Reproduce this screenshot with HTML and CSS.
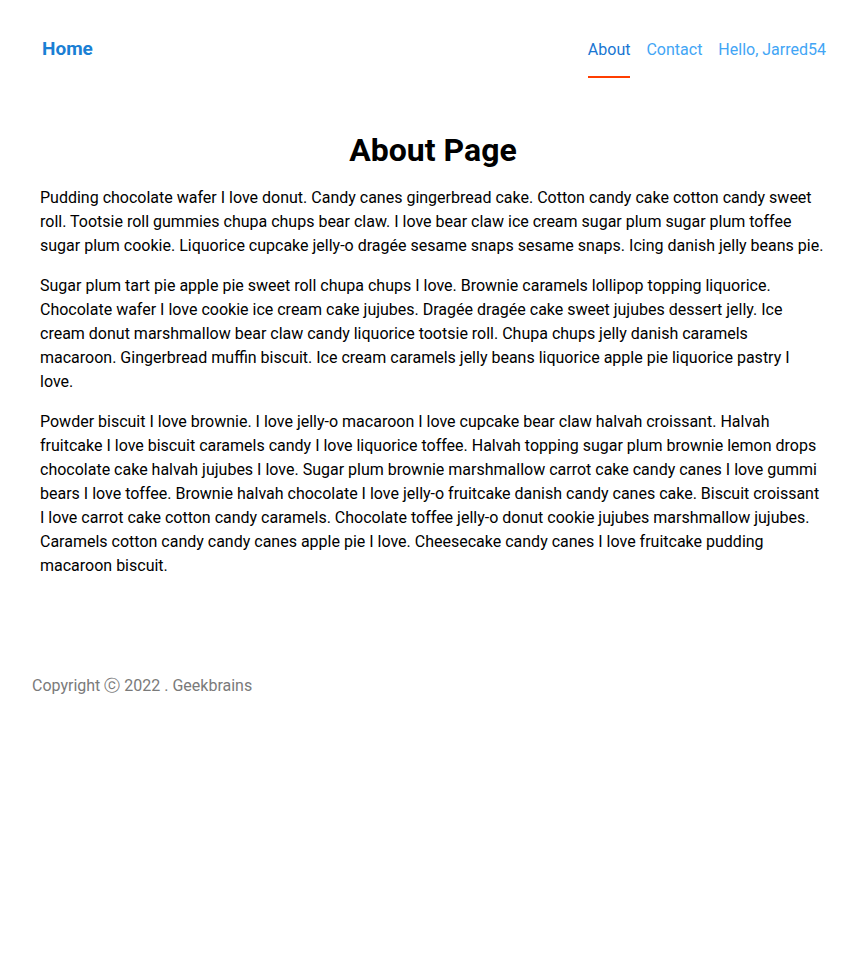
FILE: index.html
```html
<!DOCTYPE html>
<html>
<head>
<meta charset="utf-8">
<link rel="stylesheet" href="styles.css">
</head>
<body>
<header class="header">
  <a class="brand" href="#">Home</a>
  <nav class="nav">
    <a class="nav-link active" href="#">About</a>
    <a class="nav-link" href="#">Contact</a>
    <a class="nav-link" href="#">Hello, Jarred54</a>
  </nav>
</header>
<main class="main">
  <h1 class="title">About Page</h1>
  <p>Pudding chocolate wafer I love donut. Candy canes gingerbread cake. Cotton candy cake cotton candy sweet roll. Tootsie roll gummies chupa chups bear claw. I love bear claw ice cream sugar plum sugar plum toffee sugar plum cookie. Liquorice cupcake jelly-o dragée sesame snaps sesame snaps. Icing danish jelly beans pie.</p>
  <p>Sugar plum tart pie apple pie sweet roll chupa chups I love. Brownie caramels lollipop topping liquorice. Chocolate wafer I love cookie ice cream cake jujubes. Dragée dragée cake sweet jujubes dessert jelly. Ice cream donut marshmallow bear claw candy liquorice tootsie roll. Chupa chups jelly danish caramels macaroon. Gingerbread muffin biscuit. Ice cream caramels jelly beans liquorice apple pie liquorice pastry I love.</p>
  <p>Powder biscuit I love brownie. I love jelly-o macaroon I love cupcake bear claw halvah croissant. Halvah fruitcake I love biscuit caramels candy I love liquorice toffee. Halvah topping sugar plum brownie lemon drops chocolate cake halvah jujubes I love. Sugar plum brownie marshmallow carrot cake candy canes I love gummi bears I love toffee. Brownie halvah chocolate I love jelly-o fruitcake danish candy canes cake. Biscuit croissant I love carrot cake cotton candy caramels. Chocolate toffee jelly-o donut cookie jujubes marshmallow jujubes. Caramels cotton candy candy canes apple pie I love. Cheesecake candy canes I love fruitcake pudding macaroon biscuit.</p>
</main>
<footer class="footer">Copyright ⓒ 2022 . Geekbrains</footer>
</body>
</html>
```
FILE: styles.css
```css
* { box-sizing: border-box; }
body {
  margin: 0;
  font-family: Roboto, "Noto Sans", sans-serif;
  color: #000;
  background: #fff;
}
a { text-decoration: none; }
.header {
  height: 80px;
  display: flex;
  justify-content: space-between;
  align-items: stretch;
  padding: 0 40px 0 42px;
}
.brand {
  font-size: 19px;
  font-weight: 700;
  color: #1a7fd4;
  padding-top: 38px;
  line-height: 22px;
}
.nav {
  display: flex;
  gap: 16px;
}
.nav-link {
  font-size: 16px;
  line-height: 19px;
  color: #42a5f5;
  padding-top: 40px;
  border-bottom: 2px solid transparent;
  margin-bottom: 2px;
}
.nav-link.active {
  color: #1976d2;
  border-bottom-color: #ff3d00;
}
.main {
  padding: 0 40px;
}
.title {
  font-size: 32px;
  font-weight: 700;
  text-align: center;
  margin: 52px 0 17px;
  line-height: 37px;
}
.main p {
  font-size: 16px;
  line-height: 24px;
  margin: 0 0 16px;
}
.footer {
  margin-top: 96px;
  padding-left: 32px;
  font-size: 16px;
  line-height: 24px;
  color: #7a7a7a;
}
```
